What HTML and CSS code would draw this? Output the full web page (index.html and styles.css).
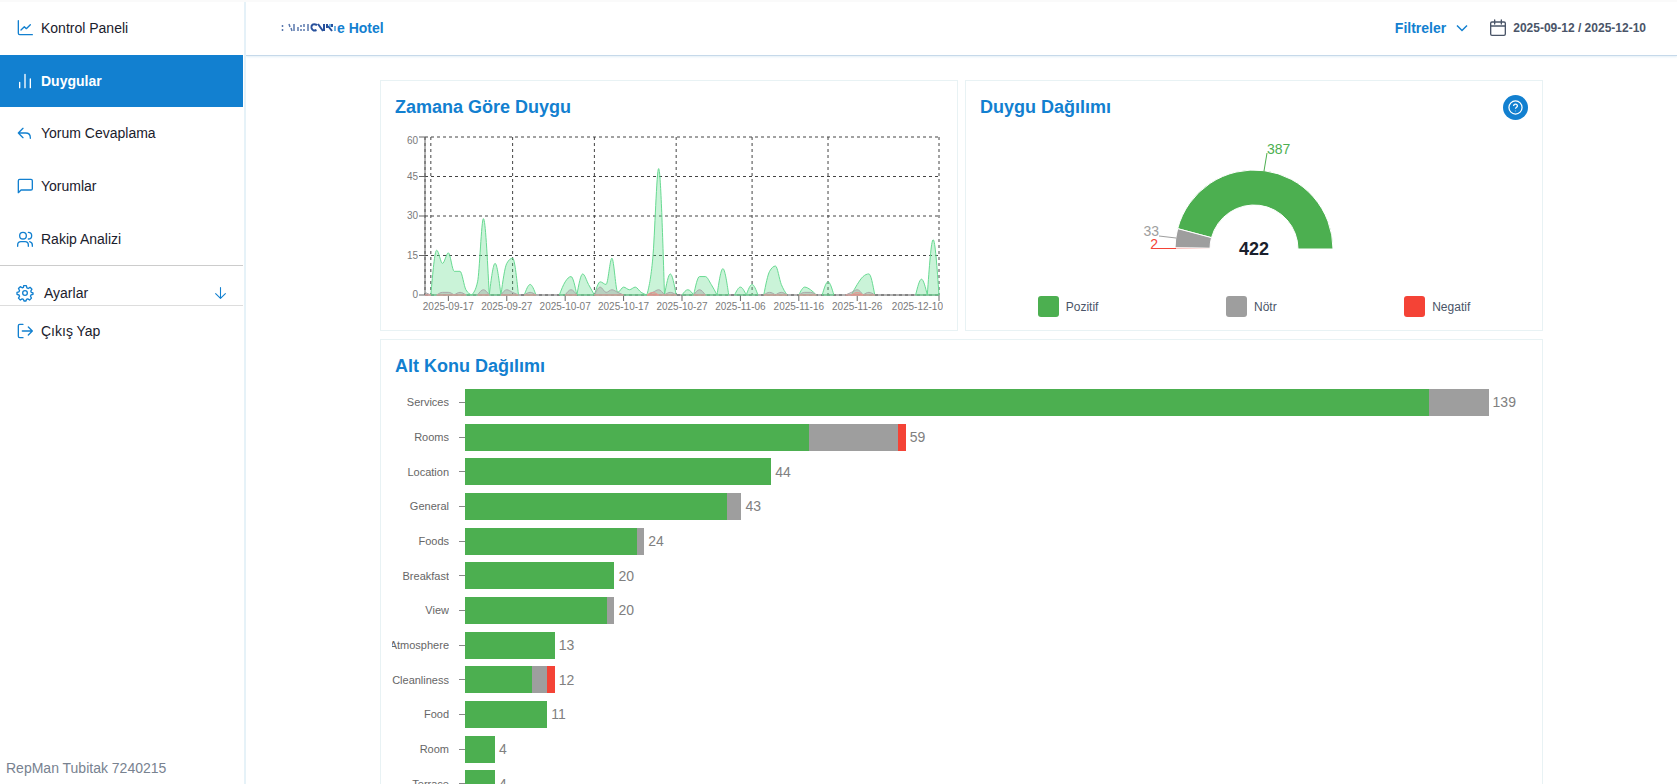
FILE: index.html
```html
<!DOCTYPE html>
<html lang="tr">
<head>
    <meta charset="UTF-8">
    <meta name="viewport" content="width=device-width, initial-scale=1.0">
    <title>Duygular</title>
    <link rel="stylesheet" href="styles.css">
</head>
<body>
    <aside class="sidebar">
        <nav class="menu">
            <a class="menu-item" href="#">
                <svg class="icon" viewBox="0 0 24 24"><path d="M2 1v19a2 2 0 0 0 2 2h19M6 15l5-5 3 3 6-6"/></svg>
                Kontrol Paneli
            </a>
            <a class="menu-item active" href="#">
                <svg class="icon" viewBox="0 0 24 24"><path d="M4 14v8M12 2v20M20 9v13"/></svg>
                Duygular
            </a>
            <a class="menu-item" href="#">
                <svg class="icon" viewBox="0 0 24 24"><path d="M9 5l-7 7 7 7M2 12h11c4 0 7 2 7 7v1"/></svg>
                Yorum Cevaplama
            </a>
            <a class="menu-item" href="#">
                <svg class="icon" viewBox="0 0 24 24"><path d="M2 22V4a2 2 0 0 1 2-2h17a2 2 0 0 1 2 2v12a2 2 0 0 1-2 2H6z"/></svg>
                Yorumlar
            </a>
            <a class="menu-item" href="#">
                <svg class="icon" viewBox="0 0 24 24"><circle cx="9" cy="7" r="5"/><path d="M1 23v-2c0-3 2-5 5-5h6c3 0 5 2 5 5v2M17 2a5 5 0 0 1 0 10M23 23v-2c0-3-1-4-4-5"/></svg>
                Rakip Analizi
            </a>
        </nav>
        <button class="settings" type="button">
            <svg class="icon" viewBox="0 0 24 24"><circle cx="12" cy="12" r="3.5"/><path d="M10 1h4l.8 3.3 2 .9L19.600 3.500l2.800 2.800-1.700 2.800.8 2L24 12v2l-3 .9-.8 2 1.500 2.800-2.800 2.800-2.700-1.700-2 .8L13.500 24h-3l-.8-2.400-2-.8L5 22.500l-2.800-2.800L3.800 17 3 15l-3-1v-3l3-.8.8-2L2.200 5.300 5 2.500l2.700 1.700 1.900-.8z"/></svg>
            <span>Ayarlar</span>
            <svg class="icon arrow" viewBox="0 0 24 24"><path d="M12 2v19M3 13l9 9 9-9"/></svg>
        </button>
        <a class="menu-item logout" href="#">
            <svg class="icon" viewBox="0 0 24 24"><path d="M9 2H4a2 2 0 0 0-2 2v16a2 2 0 0 0 2 2h5M8 12h15M17 6l6 6-6 6"/></svg>
            Çıkış Yap
        </a>
        <p class="user">RepMan Tubitak 7240215</p>
    </aside>

    <div class="page">
        <header class="topbar">
            <div class="hotel">
                <svg class="hotel-mark" viewBox="0 0 56 14">
                    <path d="M1.500 4v2M1.500 8v2M8 3l1 3M10 7l1 3M13 3v7M17 6v4M20 4v2M20 8v2M23 3v3M23 8v2M27 3v7"/>
                    <path class="bold" d="M36 4c-4-2-6 0-5.500 3 1 3 3 3 5 2M37 3l5 7M43 3v7M46 3v4M47 5l4 5M51 3v3"/>
                    <path class="light" d="M54 5v5M49 3v3"/>
                </svg><span>e Hotel</span>
            </div>
            <div class="tools">
                <button class="filters" type="button">
                    Filtreler
                    <svg class="chevron" viewBox="0 0 12 12"><path d="M1 3.500l5 5 5-5"/></svg>
                </button>
                <button class="dates" type="button">
                    <svg class="icon" viewBox="0 0 24 24"><rect x="1" y="3" width="22" height="20" rx="2"/><path d="M1 9h22M7 0v6M17 0v6"/></svg>
                    2025-09-12 / 2025-12-10
                </button>
            </div>
        </header>

        <main class="content">
            <section class="card">
                <div class="card-head"><h2>Zamana Göre Duygu</h2></div>
                <svg class="time-chart" id="time-chart"></svg>
            </section>

            <section class="card">
                <div class="card-head">
                    <h2>Duygu Dağılımı</h2>
                    <button class="help" type="button" aria-label="Yardım">
                        <svg viewBox="0 0 24 24"><circle cx="12" cy="12" r="10.500"/><path d="M9 9.500c0-4 6-4 6 0 0 2-3 2-3 4.500M12 17v1"/></svg>
                    </button>
                </div>
                <svg class="gauge" id="gauge" viewBox="0 0 240 177"></svg>
                <ul class="legend">
                    <li><i class="positive"></i>Pozitif</li>
                    <li><i class="neutral"></i>Nötr</li>
                    <li><i class="negative"></i>Negatif</li>
                </ul>
            </section>

            <section class="card wide">
                <div class="card-head"><h2>Alt Konu Dağılımı</h2></div>
                <ul class="topics" id="topics"></ul>
            </section>
        </main>
    </div>
    <script src="script.js"></script>
</body>
</html>
```

FILE: styles.css
```css
* {
    box-sizing: border-box;
}

body {
    margin: 0;
    height: 100vh;
    display: flex;
    overflow: hidden;
    background: #fff;
    border-top: 2px solid #fafafa;
    font-family: "Liberation Sans", Arial, sans-serif;
    font-size: 14px;
    color: #1a202c;
}

button {
    font: inherit;
    background: none;
    border: none;
    padding: 0;
    cursor: pointer;
}

ul {
    list-style: none;
    margin: 0;
    padding: 0;
}

.icon {
    width: 16px;
    height: 16px;
    flex: none;
    overflow: visible;
    fill: none;
    stroke: #1280d0;
    stroke-width: 2;
    stroke-linecap: round;
    stroke-linejoin: round;
}

/* Sidebar */
.sidebar {
    width: 246px;
    flex: none;
    display: flex;
    flex-direction: column;
    padding-right: 1px;
    border-right: 2px solid #e6f2f8;
}

.menu {
    height: 263px;
    display: flex;
    flex-direction: column;
}

.menu-item {
    flex: 1;
    display: flex;
    align-items: center;
    gap: 8px;
    padding-left: 17px;
    color: #1a202c;
    text-decoration: none;
}

.menu-item.active {
    background: #1280d0;
    color: #fff;
    font-weight: bold;
}

.menu-item.active .icon {
    stroke: #fff;
}

.settings {
    height: 41px;
    display: flex;
    align-items: center;
    gap: 11px;
    padding: 14px 16px 0 17px;
    border-top: 1px solid #ccc;
    border-bottom: 1px solid #ddd;
    color: #1a202c;
}

.settings .arrow {
    width: 13px;
    margin-left: auto;
}

.menu-item.logout {
    flex: none;
    height: 50px;
}

.user {
    margin: auto 0 8px 6px;
    line-height: 16px;
    color: #788290;
}

/* Top bar */
.page {
    flex: 1;
    min-width: 0;
}

.topbar {
    height: 54px;
    display: flex;
    align-items: center;
    justify-content: space-between;
    padding: 0 31px 1px 35px;
    border-bottom: 1px solid #c6d9ea;
    box-shadow: 0 1px 2px #e3eff7;
}

.hotel {
    display: flex;
    align-items: center;
    font-weight: bold;
    color: #1280d0;
}

.hotel-mark {
    width: 56px;
    height: 14px;
    fill: none;
    stroke: #5a78ad;
    stroke-width: 1.5;
}

.hotel-mark .bold {
    stroke: #27509c;
    stroke-width: 2;
}

.hotel-mark .light {
    stroke: #3f9fe0;
}

.tools {
    display: flex;
    align-items: center;
    gap: 22px;
}

.filters,
.dates {
    display: flex;
    align-items: center;
    font-weight: bold;
}

.filters {
    gap: 10px;
    color: #1280d0;
}

.chevron {
    width: 12px;
    height: 12px;
    fill: none;
    stroke: #1280d0;
    stroke-width: 1.5;
}

.dates {
    gap: 7px;
    font-size: 12px;
    color: #4a5568;
}

.dates .icon {
    stroke: #4a5568;
}

/* Cards */
.content {
    max-width: 1163px;
    margin: 24px auto 0;
    display: grid;
    grid-template-columns: 1fr 1fr;
    gap: 8px 7px;
}

.card {
    min-width: 0;
    padding: 14px 14px 13px;
    border: 1px solid #e8f2f4;
}

.card.wide {
    grid-column: span 2;
}

.card-head {
    height: 24px;
    display: flex;
    align-items: center;
    justify-content: space-between;
}

h2 {
    margin: 0;
    font-size: 18px;
    line-height: 24px;
    color: #1280d0;
}

.help {
    width: 25px;
    height: 25px;
    display: flex;
    align-items: center;
    justify-content: center;
    border-radius: 50%;
    background: #1280d0;
}

.help svg {
    width: 15px;
    height: 15px;
    overflow: visible;
    fill: none;
    stroke: #fff;
    stroke-width: 2;
}

/* Time chart */
.time-chart {
    display: block;
    width: 100%;
    height: 198px;
}

.time-chart text {
    font-size: 10px;
    fill: #7a7a7a;
}

.grid-line {
    stroke: #444;
    stroke-dasharray: 3 3;
}

.axis {
    fill: none;
    stroke: #666;
}

.area-positive {
    fill: rgba(80, 214, 125, 0.3);
    stroke: #68da92;
}

.area-neutral {
    fill: rgba(158, 158, 158, 0.4);
    stroke: #a9a9a9;
}

.area-negative {
    fill: rgba(244, 67, 54, 0.2);
    stroke: #e89a94;
}

/* Gauge */
.gauge {
    display: block;
    width: 240px;
    height: 177px;
    margin: 0 auto;
}

.gauge-positive { fill: #4caf50; }
.gauge-neutral { fill: #9e9e9e; }
.gauge-negative { fill: #f44336; }
.gauge-slice { stroke: #fff; }
.line-positive { stroke: #4caf50; }
.line-neutral { stroke: #9e9e9e; }
.line-negative { stroke: #f44336; }

.gauge-total {
    font-size: 18px;
    font-weight: bold;
    fill: #1a202c;
}

.legend {
    display: flex;
    justify-content: space-around;
    gap: 12px;
    font-size: 12px;
    color: #4a5568;
}

.legend li {
    display: flex;
    align-items: center;
    gap: 7px;
}

.legend i {
    width: 21px;
    height: 21px;
    border-radius: 3px;
}

.positive { background: #4caf50; }
.neutral { background: #9e9e9e; }
.negative { background: #f44336; }

/* Topic bars */
.topics {
    height: 416px;
    margin: 7px 0 0 -3px;
    display: flex;
    flex-direction: column;
}

.topics li {
    flex: 1;
    display: flex;
    align-items: center;
}

.topic-name {
    width: 57px;
    display: flex;
    justify-content: flex-end;
    overflow: hidden;
    font-size: 11px;
    color: #666;
}

.tick {
    width: 6px;
    height: 1px;
    margin-left: 10px;
    background: #888;
}

.track {
    flex: 1;
    height: 27px;
    margin-right: 17px;
    display: flex;
    align-items: center;
}

.track i {
    height: 100%;
    flex: none;
}

.track span {
    margin-left: 4px;
    color: #808080;
}
```

FILE: script.js
```js
const DAYS = 88;
const MAX_COUNT = 60;
const TOPIC_MAX = 140;

// day index -> review count
const positive = { 2: 17, 3: 12, 4: 16, 5: 9, 6: 9, 7: 2, 9: 5, 10: 29, 12: 12, 14: 12, 15: 14, 18: 4,
    24: 5, 25: 7, 27: 8, 28: 4, 30: 5, 31: 4, 32: 14, 33: 1, 34: 3, 35: 2, 36: 3, 37: 1, 39: 14, 40: 48, 42: 8,
    45: 2, 47: 7, 48: 7, 49: 4, 51: 10, 54: 3, 56: 4, 59: 9, 60: 11, 61: 4, 65: 3, 66: 2, 69: 5,
    74: 4, 75: 7, 76: 8, 85: 6, 87: 21 };
const neutral = { 0: 1, 3: 1, 4: 1, 6: 1, 10: 2, 14: 2, 15: 1, 18: 1, 25: 2, 30: 3, 31: 1, 32: 2, 33: 1,
    39: 1, 40: 2, 42: 1, 47: 2, 59: 1, 61: 1, 65: 1, 66: 1, 73: 1, 74: 2, 76: 1 };
const negative = { 39: 1, 74: 1 };

const topics = [
    ['Services', 129, 8, 0, 139],
    ['Rooms', 46, 12, 1, 59],
    ['Location', 41, 0, 0, 44],
    ['General', 35, 2, 0, 43],
    ['Foods', 23, 1, 0, 24],
    ['Breakfast', 20, 0, 0, 20],
    ['View', 19, 1, 0, 20],
    ['Atmosphere', 12, 0, 0, 13],
    ['Cleanliness', 9, 2, 1, 12],
    ['Food', 11, 0, 0, 11],
    ['Room', 4, 0, 0, 4],
    ['Terrace', 4, 0, 0, 4]
];

// Monotone cubic through the points
function curve(p) {
    const n = p.length;
    const s = [];
    for (let i = 0; i < n - 1; i++) s.push((p[i + 1][1] - p[i][1]) / (p[i + 1][0] - p[i][0]));
    if (n === 2) return 'M' + p[0] + 'L' + p[1];
    const t = [];
    for (let i = 1; i < n - 1; i++) {
        const a = s[i - 1], b = s[i];
        t[i] = (Math.sign(a) + Math.sign(b)) * Math.min(Math.abs(a), Math.abs(b), Math.abs(a + b) / 4);
    }
    t[0] = (3 * s[0] - t[1]) / 2;
    t[n - 1] = (3 * s[n - 2] - t[n - 2]) / 2;
    let d = 'M' + p[0];
    for (let i = 1; i < n; i++) {
        const h = (p[i][0] - p[i - 1][0]) / 3;
        d += `C${p[i - 1][0] + h},${p[i - 1][1] + h * t[i - 1]} ${p[i][0] - h},${p[i][1] - h * t[i]} ${p[i]}`;
    }
    return d;
}

function drawTimeChart() {
    const svg = document.getElementById('time-chart');
    const width = svg.clientWidth;
    const left = 30, right = width - 4, top = 18, bottom = 176;
    const x = i => left + (right - left) * i / DAYS;
    const y = v => bottom - (bottom - top) * v / MAX_COUNT;
    let out = '';

    for (let v = 0; v <= MAX_COUNT; v += 15) {
        out += `<line class="grid-line" x1="${left}" y1="${y(v)}" x2="${right}" y2="${y(v)}"/>`;
    }
    [0, 1, 15, 29, 43, 56, 69, 88].forEach(i => {
        out += `<line class="grid-line" x1="${x(i)}" y1="${top}" x2="${x(i)}" y2="${bottom}"/>`;
    });

    out += `<path class="axis" d="M${left} ${top}V${bottom}H${right}"/>`;
    for (let v = 0; v <= MAX_COUNT; v += 15) {
        out += `<line class="axis" x1="${left - 6}" y1="${y(v)}" x2="${left}" y2="${y(v)}"/>`;
        out += `<text x="${left - 7}" y="${Math.max(y(v), top + 4) + 3}" text-anchor="end">${v}</text>`;
    }
    ['2025-09-17', '2025-09-27', '2025-10-07', '2025-10-17', '2025-10-27', '2025-11-06', '2025-11-16', '2025-11-26'].forEach((date, n) => {
        const tx = x(4 + n * 10);
        out += `<line class="axis" x1="${tx}" y1="${bottom}" x2="${tx}" y2="${bottom + 6}"/>`;
        out += `<text x="${tx}" y="191" text-anchor="middle">${date}</text>`;
    });
    out += `<line class="axis" x1="${right}" y1="${bottom}" x2="${right}" y2="${bottom + 6}"/>`;
    out += `<text x="${width}" y="191" text-anchor="end">2025-12-10</text>`;

    [[positive, 'positive'], [neutral, 'neutral'], [negative, 'negative']].forEach(([data, name]) => {
        let run = [];
        for (let i = 0; i <= DAYS; i++) {
            const v = data[i] || 0;
            if (v) {
                if (!run.length && i) run.push([x(i - 1), bottom]);
                run.push([x(i), y(v)]);
            } else if (run.length) {
                run.push([x(i), bottom]);
                out += `<path class="area-${name}" d="${curve(run)}L${run[0][0]},${bottom}"/>`;
                if (name === 'neutral') out += `<path class="area-negative" d="M${run[0][0]} ${bottom}H${x(i)}"/>`;
                run = [];
            }
        }
    });
    svg.innerHTML = out;
}

function drawGauge() {
    const cx = 120, cy = 130, outer = 79, inner = 44;
    const total = 422;
    const point = (r, a) => `${cx + r * Math.cos(a)} ${cy - r * Math.sin(a)}`;
    let start = 0;
    let out = '';
    [['positive', 387], ['neutral', 33], ['negative', 2]].forEach(([name, count]) => {
        const end = start + Math.PI * count / total;
        out += `<path class="gauge-slice gauge-${name}" d="M${point(outer, start)}A${outer} ${outer} 0 0 0 ${point(outer, end)}L${point(inner, end)}A${inner} ${inner} 0 0 1 ${point(inner, start)}Z"/>`;
        start = end;
    });
    out += '<path class="line-positive" d="M130 52l3-18"/><path class="line-neutral" d="M42 119l-17-2"/><path class="line-negative" d="M42 129.500H23"/>';
    out += '<text class="gauge-positive" x="133" y="35">387</text>';
    out += '<text class="gauge-neutral" x="25" y="117" text-anchor="end">33</text>';
    out += '<text class="gauge-negative" x="24" y="130" text-anchor="end">2</text>';
    out += '<text class="gauge-total" x="120" y="136" text-anchor="middle">422</text>';
    document.getElementById('gauge').innerHTML = out;
}

function drawTopics() {
    document.getElementById('topics').innerHTML = topics.map(([name, pos, neu, neg, total]) => {
        const bars = [['positive', pos], ['neutral', neu], ['negative', neg]]
            .filter(([, count]) => count)
            .map(([cls, count]) => `<i class="${cls}" style="width:${count / TOPIC_MAX * 100}%"></i>`)
            .join('');
        return `<li><div class="topic-name">${name}</div><div class="tick"></div><div class="track">${bars}<span>${total}</span></div></li>`;
    }).join('');
}

drawTimeChart();
drawGauge();
drawTopics();
window.addEventListener('resize', drawTimeChart);
```
